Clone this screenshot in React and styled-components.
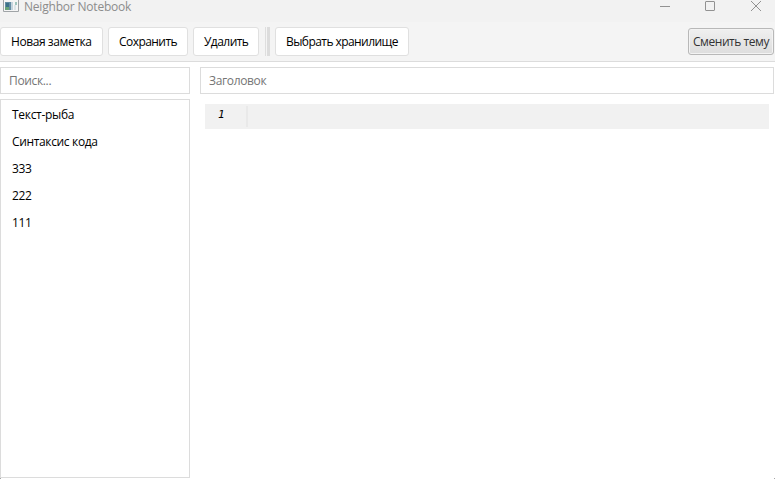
import React from "react";
import styled, { createGlobalStyle } from "styled-components";

const GlobalStyle = createGlobalStyle`
  * { box-sizing: border-box; }
  body { margin: 0; overflow: hidden; background: #222; }
`;

const Window = styled.div`
  width: 775px;
  height: 479px;
  display: flex;
  flex-direction: column;
  border-radius: 0 0 1.5px 1.5px;
  background: #fff;
  color: #000;
  font: 12px/16px "Open Sans", "Noto Sans", sans-serif;
  white-space: nowrap;
`;

const TitleBar = styled.header`
  height: 22px;
  flex: none;
  display: flex;
  align-items: flex-start;
  background: #f2f2f2;
  color: #8c8c8c;
`;

const AppIcon = styled.svg`
  width: 16px;
  height: 14px;
  margin-left: 3px;
`;

const WindowTitle = styled.span`
  margin: 0 auto 0 5px;
  line-height: 14px;
  letter-spacing: ${(p) => p.$track}px;
`;

const WindowControls = styled.svg`
  width: 115px;
  height: 14px;
`;

const Toolbar = styled.div`
  height: 40px;
  flex: none;
  display: flex;
  gap: 5px;
  padding: 5px 1px 0 0;
  background: #f4f4f4;
  border-bottom: 1px solid #dcdcdc;
`;

const Button = styled.button`
  width: ${(p) => p.$width}px;
  height: 29px;
  padding: 0 0 0 10px;
  text-align: left;
  border: 1px solid #e0e0e0;
  border-radius: 3px;
  background: #fff;
  color: #000;
  font: inherit;
  letter-spacing: ${(p) => p.$track}px;
`;

const ThemeButton = styled(Button)`
  height: 27px;
  margin: 1px 0 0 auto;
  padding-left: 4px;
  border-color: #b8b8b8;
  background: linear-gradient(#f0f0f0, #dddddd);
  box-shadow: inset 0 0 0 1px #f3f3f3;
  color: #333;
`;

const Separator = styled.div`
  width: 5px;
  height: 29px;
  margin: 0 0 0 1px;
  border-left: 1px solid #dedede;
  border-right: 3px solid #dcdcdc;
`;

const Content = styled.main`
  flex: 1;
  display: flex;
  gap: 10px;
  padding: 5px 1px 1px 0;
`;

const Sidebar = styled.aside`
  width: 190px;
  display: flex;
  flex-direction: column;
  gap: 5px;
`;

const Input = styled.input`
  width: 100%;
  height: 27px;
  flex: none;
  padding: 0 8px;
  border: 1px solid #dcdcdc;
  border-radius: 0;
  outline: none;
  background: #fff;
  font: inherit;
  letter-spacing: ${(p) => p.$track}px;
  &::placeholder { color: #757575; opacity: 1; }
`;

const NoteList = styled.ul`
  flex: 1;
  margin: 0;
  padding: 1px 0 0 11px;
  border: 1px solid #dcdcdc;
  list-style: none;
`;

const Note = styled.li`
  height: 27px;
  line-height: 27px;
  letter-spacing: ${(p) => p.$track}px;
`;

const Editor = styled.section`
  flex: 1;
  display: flex;
  flex-direction: column;
`;

const CodeLine = styled.div`
  height: 25px;
  margin: 10px 5px 0;
  padding-top: 2px;
  display: flex;
  background: #f1f1f1;
`;

const LineNumber = styled.div`
  width: 43px;
  height: 21px;
  padding-left: 13px;
  border-right: 2px solid #e9e9e9;
  font: italic 11px/18px "DejaVu Sans Mono", monospace;
`;

const notes = [
  { title: "Текст-рыба", track: -0.3 },
  { title: "Синтаксис кода", track: -0.35 },
  { title: "333", track: -0.3 },
  { title: "222", track: -0.3 },
  { title: "111", track: -0.3 },
];

export default function App() {
  return (
    <Window>
      <GlobalStyle />
      <TitleBar>
        <AppIcon viewBox="0 0 16 14">
          <path d="M0.5 0v11.5h15V0" fill="#f5f5f5" stroke="#a0a4a7" />
          <path d="M2 2h6v8H2z" fill="#648da3" />
          <path d="M3 3h3v4H3z" fill="#3d7188" />
          <path d="M2 7h4v3H2z" fill="#67a278" />
          <path d="M8 2h2v8H8z" fill="#c3d3dd" />
          <path d="M12 2h2v3h-2z" fill="#9fc4bd" />
          <path d="M11 5h2v5h-2z" fill="#dce4e8" />
        </AppIcon>
        <WindowTitle $track={-0.2}>Neighbor Notebook</WindowTitle>
        <WindowControls viewBox="0 0 115 14" fill="none" stroke="#929292">
          <path d="M0 6.5h10" />
          <rect x="45.5" y="1.5" width="9" height="9" rx="0.5" />
          <path d="M91 1l10 10M101 1L91 11" />
        </WindowControls>
      </TitleBar>
      <Toolbar>
        <Button $width={103} $track={-0.42}>Новая заметка</Button>
        <Button $width={80} $track={-0.55}>Сохранить</Button>
        <Button $width={66} $track={-0.55}>Удалить</Button>
        <Separator />
        <Button $width={134} $track={-0.56}>Выбрать хранилище</Button>
        <ThemeButton $width={86} $track={-0.45}>Сменить тему</ThemeButton>
      </Toolbar>
      <Content>
        <Sidebar>
          <Input placeholder="Поиск..." $track={-0.35} />
          <NoteList>
            {notes.map((n) => (
              <Note key={n.title} $track={n.track}>{n.title}</Note>
            ))}
          </NoteList>
        </Sidebar>
        <Editor>
          <Input placeholder="Заголовок" $track={-0.35} />
          <CodeLine>
            <LineNumber>1</LineNumber>
          </CodeLine>
        </Editor>
      </Content>
    </Window>
  );
}
